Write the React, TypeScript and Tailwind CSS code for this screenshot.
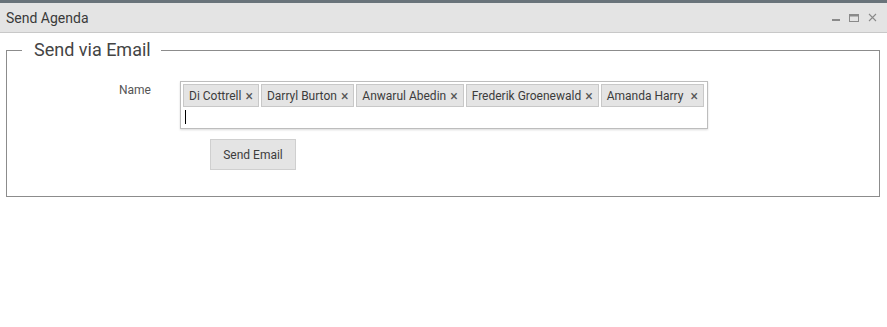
import React from 'react';

const recipients = [
  'Di Cottrell',
  'Darryl Burton',
  'Anwarul Abedin',
  'Frederik Groenewald',
  'Amanda Harry ',
];

const WindowControls = () => (
  <div className="flex items-center gap-[9px] pr-[10px]">
    <svg width="8" height="8" viewBox="0 0 8 8">
      <rect x="0" y="5" width="8" height="2" fill="#8a8a8a" />
    </svg>
    <svg width="10" height="8" viewBox="0 0 10 8">
      <rect x="0.5" y="0.5" width="9" height="7" fill="none" stroke="#8a8a8a" />
      <rect x="0.5" y="0.5" width="9" height="2" fill="#8a8a8a" />
    </svg>
    <svg width="9" height="9" viewBox="0 0 9 9">
      <path d="M1 1 L8 8 M8 1 L1 8" stroke="#8a8a8a" strokeWidth="1.1" />
    </svg>
  </div>
);

export default function App() {
  return (
    <div
      className="w-[887px] h-[327px] bg-white text-[#333]"
      style={{ fontFamily: 'Roboto, "Liberation Sans", sans-serif' }}
    >
      <div className="h-[3px] bg-[#69737a]" />
      <div className="flex h-[30px] items-center justify-between border-b border-[#c8c8c8] bg-[#e4e4e4] pl-[6px]">
        <span className="pt-[2px] text-[14px] text-[#3a3a3a]">Send Agenda</span>
        <WindowControls />
      </div>

      <fieldset className="ml-[6px] mt-[7px] w-[874px] border border-[#8c8c8c] pb-[26px]">
        <legend className="ml-[15px] pl-[12px] pr-[10px] text-[18px] leading-[20px] text-[#444]">
          Send via Email
        </legend>

        <div className="flex pt-[21px] pl-[112px]">
          <label className="w-[61px] text-[12px] text-[#555]">Name</label>
          <div className="w-[528px] h-[48px] border border-[#bdbdbd] p-[2px] shadow-[0_1px_2px_rgba(0,0,0,0.15)]">
            <div className="flex flex-wrap gap-[2px]">
              {recipients.map((name) => (
                <span
                  key={name}
                  className="flex h-[23px] items-center border border-[#c8c8c8] bg-[#e4e4e4] px-[5px] text-[12px] text-[#3c3c3c] whitespace-pre"
                >
                  {name}
                  <span className="ml-[4px] text-[14px] leading-[14px] text-[#555]">×</span>
                </span>
              ))}
            </div>
            <div className="ml-[2px] mt-[3px] h-[14px] w-[1px] bg-black" />
          </div>
        </div>

        <div className="pl-[203px] mt-[10px]">
          <button className="h-[31px] w-[86px] border border-[#cfcfcf] bg-[#e4e4e4] text-[12px] text-[#3c3c3c]">
            Send Email
          </button>
        </div>
      </fieldset>
    </div>
  );
}
